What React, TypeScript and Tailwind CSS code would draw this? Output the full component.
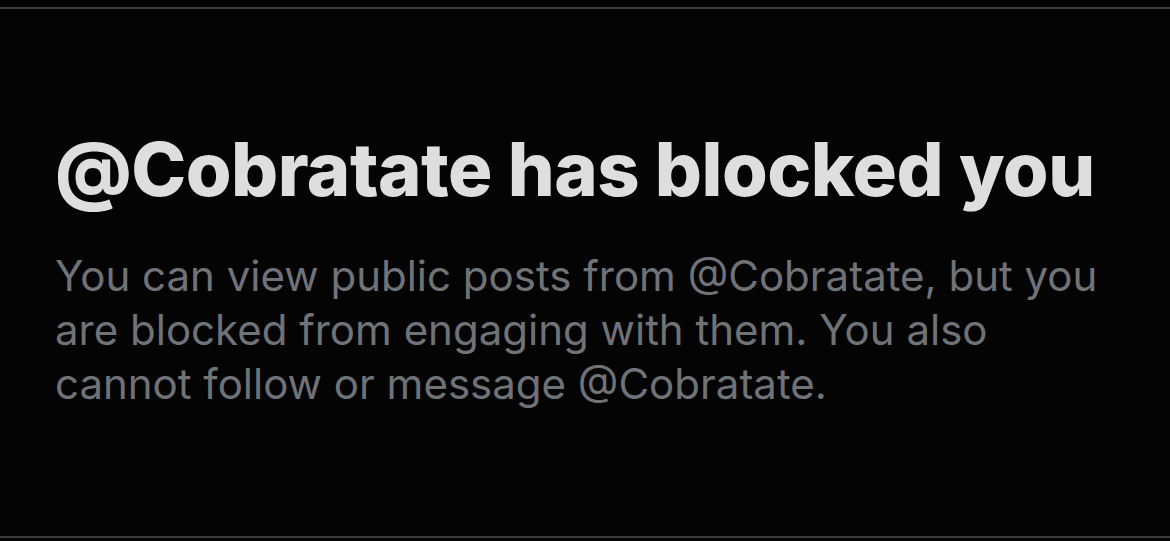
export default function App() {
  return (
    <div className="w-[1170px] h-[541px] bg-[#040404] flex flex-col overflow-hidden">
      <div className="h-[7px]" />
      <div className="h-[2px] bg-[#3c3c3c]" />
      <div className="flex-1 flex flex-col pl-[55px] pr-[40px] pt-[116px]">
        <h1
          className="text-[74px] leading-[88px] font-extrabold text-[#dedede] tracking-[-0.5px]"
          style={{ fontFamily: 'Inter, "Liberation Sans", sans-serif' }}
        >
          @Cobratate has blocked you
        </h1>
        <p
          className="mt-[36px] text-[42px] leading-[54px] text-[#6f7378] w-[1070px]"
          style={{ fontFamily: 'Inter, "Noto Sans", sans-serif' }}
        >
          You can view public posts from @Cobratate, but you are blocked from engaging with them. You also cannot follow or message @Cobratate.
        </p>
      </div>
      <div className="h-[2px] bg-[#3c3c3c]" />
      <div className="h-[3px]" />
    </div>
  )
}
